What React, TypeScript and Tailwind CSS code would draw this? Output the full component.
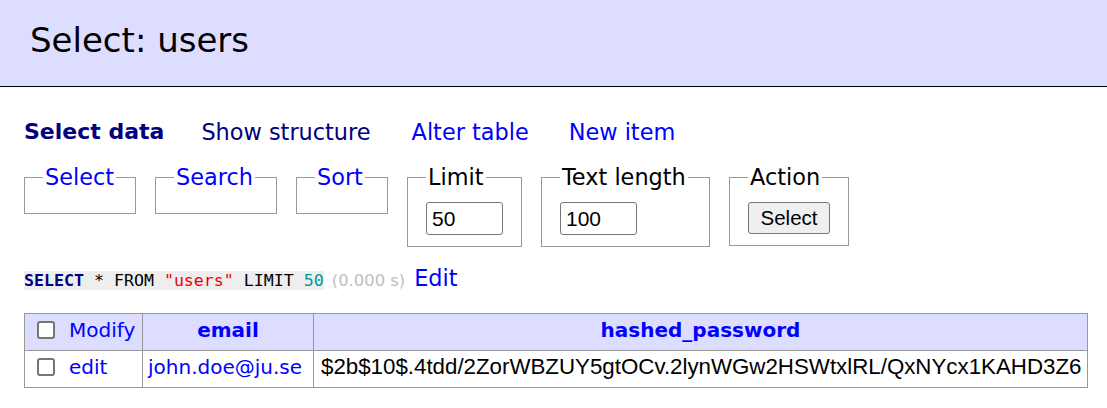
import React from "react";

const sans = "font-['DejaVu_Sans','Verdana',sans-serif]";
const mono = "font-['DejaVu_Sans_Mono',monospace]";
const arial = "font-['Liberation_Sans','Arial',sans-serif]";

const checkbox =
  "appearance-none w-[18px] h-[18px] border-2 border-[#767676] rounded-[3px] bg-white align-[-2px] ml-[6px] mr-[14px]";

function Box({ legend, link, width, children }: { legend: string; link?: boolean; width: string; children?: React.ReactNode }) {
  return (
    <fieldset className={`${width} border border-[#999] px-[18px] pt-[11px] pb-[11px]`}>
      <legend className={`px-[2px] leading-[28px] ${link ? "text-[#00f]" : "text-black"}`}>{legend}</legend>
      {children}
    </fieldset>
  );
}

export default function App() {
  return (
    <div className={`${sans} min-h-screen bg-white text-black text-[22.4px]`}>
      {/* header */}
      <div className="h-[87px] bg-[#ddf] border-b border-black pl-[30px] pt-[20px]">
        <h2 className="text-[34px] leading-[40px] font-normal">Select: users</h2>
      </div>

      <div className="pl-[24px]">
        <p className="mt-[32px] flex leading-[26px]">
          <a className="mr-[37px] text-[22px] font-bold text-[#000080]">Select data</a>
          <a className="mr-[41px] text-[#000080]">Show structure</a>
          <a className="mr-[40px] text-[#00f]">Alter table</a>
          <a className="text-[#00f]">New item</a>
        </p>

        <form className="mt-[18px] flex items-start gap-[19px]">
          <Box legend="Select" link width="w-[112px]" />
          <Box legend="Search" link width="w-[122px]" />
          <Box legend="Sort" link width="w-[92px]" />
          <Box legend="Limit" width="w-[114px]">
            <input
              defaultValue="50"
              className={`${arial} block w-[77px] h-[33px] border border-[#767676] rounded-[3px] px-[5px] text-[21px]`}
            />
          </Box>
          <Box legend="Text length" width="w-[169px]">
            <input
              defaultValue="100"
              className={`${arial} block w-[77px] h-[33px] border border-[#767676] rounded-[3px] px-[5px] text-[21px]`}
            />
          </Box>
          <Box legend="Action" width="w-[120px]">
            <button
              type="button"
              className={`${arial} block w-[82px] h-[32px] bg-[#efefef] border border-[#767676] rounded-[3px] text-[20.5px] leading-none`}
            >
              Select
            </button>
          </Box>
        </form>

        <p className="mt-[18px] leading-[26px]">
          <code className={`${mono} text-[16.6px] bg-[#eee] whitespace-pre`}>
            <span className="font-bold text-[#000080]">SELECT</span> * FROM{" "}
            <span className="text-[#e00]">"users"</span> LIMIT <span className="text-[#099]">50</span>
          </code>
          <span className="ml-[8px] text-[16.4px] text-[#c0c0c0]">(0.000 s)</span>
          <a className="ml-[9px] text-[#00f]">Edit</a>
        </p>

        <table className="mt-[19px] table-fixed w-[1063px] border-collapse text-[20px]">
          <colgroup>
            <col className="w-[118px]" />
            <col className="w-[171px]" />
            <col className="w-[774px]" />
          </colgroup>
          <thead>
            <tr className="bg-[#ddf]">
              <th className="border border-[#999] px-[6px] pt-[2px] pb-[6px] leading-[28px] text-left font-normal whitespace-nowrap">
                <input type="checkbox" className={checkbox} />
                <a className="text-[#00f]">Modify</a>
              </th>
              <th className="border border-[#999] px-[6px] pt-[2px] pb-[6px] leading-[28px] text-center font-bold text-[#00f]">
                email
              </th>
              <th className="border border-[#999] px-[6px] pt-[2px] pb-[6px] leading-[28px] text-center font-bold text-[#00f]">
                hashed_password
              </th>
            </tr>
          </thead>
          <tbody>
            <tr>
              <td className="border border-[#999] px-[6px] pt-[2px] pb-[6px] leading-[28px] whitespace-nowrap">
                <input type="checkbox" className={checkbox} />
                <a className="text-[#00f]">edit</a>
              </td>
              <td className="border border-[#999] px-[5px] pt-[2px] pb-[6px] leading-[28px] whitespace-nowrap">
                <a className="text-[#00f]">john.doe@ju.se</a>
              </td>
              <td className={`${arial} border border-[#999] pl-[7px] pr-[6px] pt-[2px] pb-[6px] leading-[28px] text-[22.3px] whitespace-nowrap`}>
                $2b$10$.4tdd/2ZorWBZUY5gtOCv.2lynWGw2HSWtxlRL/QxNYcx1KAHD3Z6
              </td>
            </tr>
          </tbody>
        </table>
      </div>
    </div>
  );
}
